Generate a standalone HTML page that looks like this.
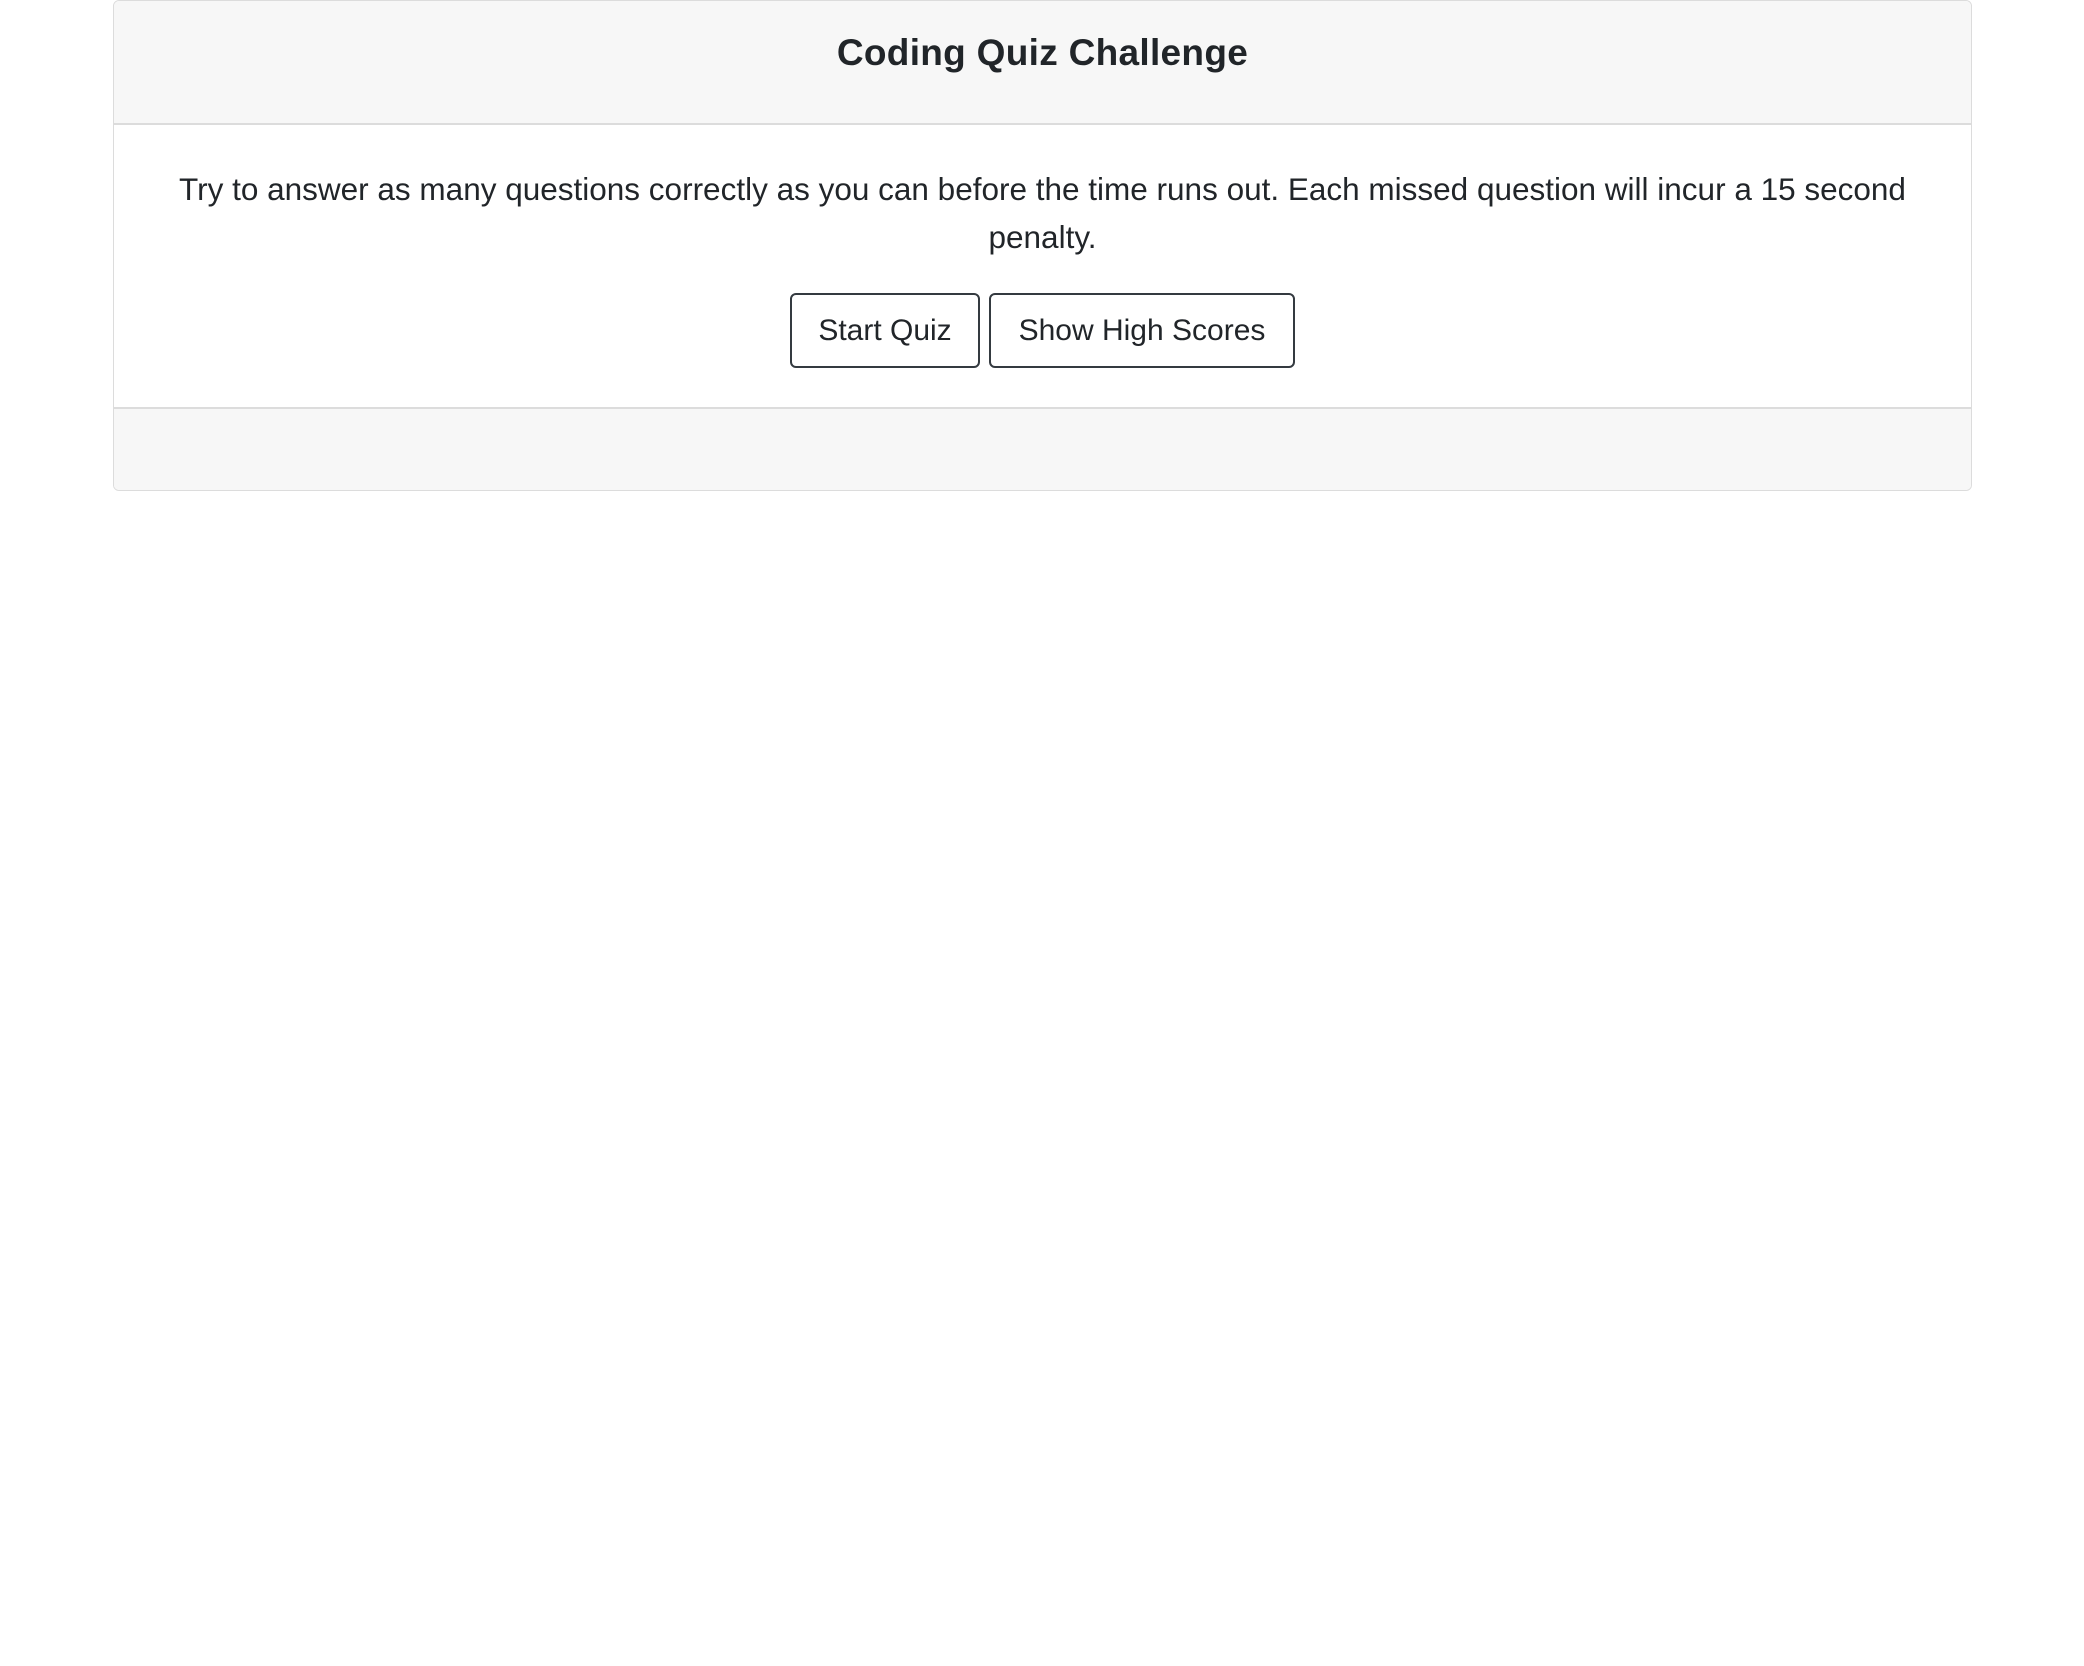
<!DOCTYPE html>
<html><head><style>
body{margin:0;background:#fff;font-family:"Liberation Sans",sans-serif;color:#212529}
.card{position:absolute;left:113px;top:0;width:1857px;height:489px;border:1px solid #dcdcdc;border-radius:6px;overflow:hidden}
.hd{height:122px;background:#f7f7f7;border-bottom:2px solid #dcdcdc;text-align:center}
.hd h1{margin:0;font-size:37px;font-weight:bold;line-height:104px;letter-spacing:0.3px}
.ft{position:absolute;top:406px;left:0;right:0;height:85px;background:#f7f7f7;border-top:2px solid #dcdcdc}
.b{position:absolute;top:292px;height:75px;border:2px solid #343a40;border-radius:6px;box-sizing:border-box;font-size:30px;line-height:71px;text-align:center;background:#fff}
</style></head><body>
<div class="card">
<div class="hd"><h1>Coding Quiz Challenge</h1></div>
<div style="position:absolute;top:164px;left:0;right:0;text-align:center;font-size:31.5px;line-height:48px;white-space:nowrap">Try to answer as many questions correctly as you can before the time runs out. Each missed question will incur a 15 second<br>penalty.</div>
<div class="b" style="left:676px;width:190px">Start Quiz</div>
<div class="b" style="left:875px;width:306px">Show High Scores</div>
<div class="ft"></div>
</div>
</body></html>
